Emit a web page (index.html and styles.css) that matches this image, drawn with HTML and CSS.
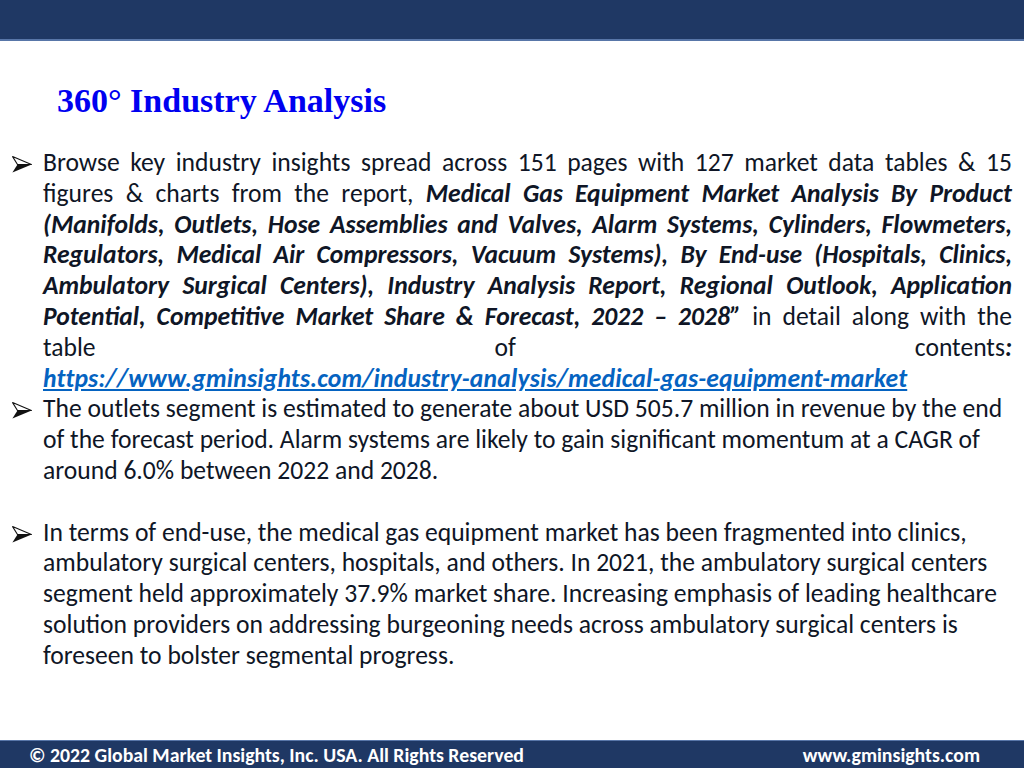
FILE: index.html
```html
<!DOCTYPE html>
<html lang="en">
<head>
<meta charset="utf-8">
<title>360° Industry Analysis</title>
<link rel="stylesheet" href="styles.css">
</head>
<body>
<div class="slide">
  <header class="topbar"></header>
  <main class="content">
    <h1 class="title">360° Industry Analysis</h1>
    <ul class="bullets">
      <li class="item">
        <svg class="arrow" viewBox="0 0 20 17" width="20" height="17" aria-hidden="true">
          <path d="M0.6 0.6 L19.4 8.5 L5.5 8.5 Z" fill="#fff" stroke="#111" stroke-width="1.1" stroke-linejoin="round"/>
          <path d="M5.5 8.5 L19.6 8.5 L0.4 16.6 Z" fill="#111"/>
        </svg>
        <p class="text justify">Browse key industry insights spread across 151 pages with 127 market data tables &amp; 15<br>figures &amp; charts from the report, <b><i>Medical Gas Equipment Market Analysis By Product</i></b><br><b><i>(Manifolds, Outlets, Hose Assemblies and Valves, Alarm Systems, Cylinders, Flowmeters,</i></b><br><b><i>Regulators, Medical Air Compressors, Vacuum Systems), By End-use (Hospitals, Clinics,</i></b><br><b><i>Ambulatory Surgical Centers), Industry Analysis Report, Regional Outlook, Application</i></b><br><b><i>Potential, Competitive Market Share &amp; Forecast, 2022 – 2028”</i></b> in detail along with the<br>table of contents<b><i>:</i></b><br><a class="link" href="#"><b><i>https://www.gminsights.com/industry-analysis/medical-gas-equipment-market</i></b></a></p>
      </li>
      <li class="item">
        <svg class="arrow" viewBox="0 0 20 17" width="20" height="17" aria-hidden="true">
          <path d="M0.6 0.6 L19.4 8.5 L5.5 8.5 Z" fill="#fff" stroke="#111" stroke-width="1.1" stroke-linejoin="round"/>
          <path d="M5.5 8.5 L19.6 8.5 L0.4 16.6 Z" fill="#111"/>
        </svg>
        <p class="text">The outlets segment is estimated to generate about USD 505.7 million in revenue by the end<br>of the forecast period. Alarm systems are likely to gain significant momentum at a CAGR of<br>around 6.0% between 2022 and 2028.</p>
      </li>
      <li class="spacer"></li>
      <li class="item">
        <svg class="arrow" viewBox="0 0 20 17" width="20" height="17" aria-hidden="true">
          <path d="M0.6 0.6 L19.4 8.5 L5.5 8.5 Z" fill="#fff" stroke="#111" stroke-width="1.1" stroke-linejoin="round"/>
          <path d="M5.5 8.5 L19.6 8.5 L0.4 16.6 Z" fill="#111"/>
        </svg>
        <p class="text">In terms of end-use, the medical gas equipment market has been fragmented into clinics,<br>ambulatory surgical centers, hospitals, and others. In 2021, the ambulatory surgical centers<br>segment held approximately 37.9% market share. Increasing emphasis of leading healthcare<br>solution providers on addressing burgeoning needs across ambulatory surgical centers is<br>foreseen to bolster segmental progress.</p>
      </li>
    </ul>
  </main>
  <footer class="footbar">
    <span class="copy">© 2022 Global Market Insights, Inc. USA. All Rights Reserved</span>
    <span class="site">www.gminsights.com</span>
  </footer>
</div>
</body>
</html>
```

FILE: styles.css
```css
* { box-sizing: border-box; }
html, body { margin: 0; padding: 0; background: #fff; }
.slide {
  width: 1024px;
  height: 768px;
  display: flex;
  flex-direction: column;
  overflow: hidden;
  font-family: Carlito, Lato, "Liberation Sans", sans-serif;
}
.topbar {
  height: 41px;
  flex: none;
  background: #1f3864;
  border-bottom: 2px solid #5876a8;
}
.content {
  flex: 1;
  padding: 0 12px 0 12px;
}
.title {
  margin: 40px 0 0 45px;
  font-family: "Liberation Serif", "Times New Roman", serif;
  font-weight: bold;
  font-size: 34px;
  line-height: 40px;
  color: #0000f0;
}
.bullets {
  list-style: none;
  margin: 27px 0 0 0;
  padding: 0;
  color: #0f1626;
  font-size: 25.6px;
  line-height: 30.8px;
}
.item {
  display: flex;
  align-items: flex-start;
}
.spacer { height: 30.8px; }
.arrow {
  flex: none;
  margin: 8px 11px 0 0;
}
.text {
  margin: 0;
  flex: 1;
}
.justify {
  text-align: justify;
  text-align-last: justify;
}
.link {
  color: #0563c1;
  text-decoration: underline;
  text-underline-offset: 2px;
  letter-spacing: 0.2px;
}
.footbar {
  height: 28px;
  flex: none;
  background: #1f3864;
  border-top: 1px solid #5876a8;
  display: flex;
  align-items: center;
  justify-content: space-between;
  padding: 0 44px 0 29px;
  color: #fff;
  font-weight: bold;
  font-size: 19.8px;
}
```
